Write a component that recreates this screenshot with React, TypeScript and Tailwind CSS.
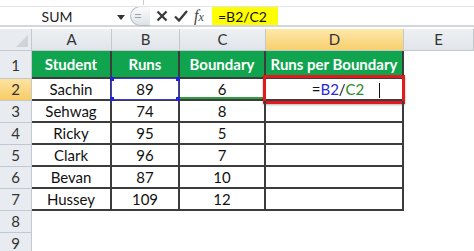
import React from 'react';

// Column widths of the sheet: row-number gutter, A, B, C, D, E
const COLS = [32, 80, 68, 86, 138, 70];

const data = [
  { name: 'Sachin', runs: '89', bnd: '6' },
  { name: 'Sehwag', runs: '74', bnd: '8' },
  { name: 'Ricky', runs: '95', bnd: '5' },
  { name: 'Clark', runs: '96', bnd: '7' },
  { name: 'Bevan', runs: '87', bnd: '10' },
  { name: 'Hussey', runs: '109', bnd: '12' },
];

function RowHead({ n, active, tall }: { n: number; active?: boolean; tall?: boolean }) {
  return (
    <div
      className={`w-[32px] shrink-0 flex justify-center border-r border-b border-[#c3c8cf] text-[15px] text-[#333] ${
        tall ? 'items-end pb-[2px]' : 'items-center'
      } ${active ? 'bg-gradient-to-b from-[#fde3a0] to-[#f7cc66]' : 'bg-[#e8ebef]'}`}
    >
      {n}
    </div>
  );
}

function FormulaBar() {
  return (
    <div className="flex h-[20px] items-stretch border-b-2 border-[#d3d7dc]">
      {/* Name box */}
      <div className="w-[130px] shrink-0 flex items-center relative">
        <span className="flex-1 text-center text-[14px] text-[#222] pr-[16px]">SUM</span>
        <svg width="8" height="5" viewBox="0 0 8 5" className="absolute right-[5px] top-[8px]">
          <path d="M0 0 L8 0 L4 5 Z" fill="#333" />
        </svg>
      </div>
      {/* Divider knob */}
      <div className="w-[20px] shrink-0 flex items-center">
        <div className="w-[22px] h-[20px] rounded-l-full border border-r-0 border-[#b9bec6] bg-gradient-to-b from-[#fafbfc] to-[#dfe3e8] flex flex-col items-center justify-center gap-[2px] pr-[6px]">
          <div className="w-[6px] h-[1px] bg-[#9aa0a8]" />
          <div className="w-[6px] h-[1px] bg-[#9aa0a8]" />
        </div>
      </div>
      {/* Cancel / enter / fx */}
      <div className="w-[62px] shrink-0 flex items-center gap-[6px] pl-[6px]">
        <svg width="12" height="12" viewBox="0 0 12 12">
          <path d="M1.5 1.5 L10.5 10.5 M10.5 1.5 L1.5 10.5" stroke="#3a3a3a" strokeWidth="2.3" />
        </svg>
        <svg width="14" height="12" viewBox="0 0 14 12">
          <path d="M1 6.5 L5 10.5 L13 1" stroke="#3a3a3a" strokeWidth="2.3" fill="none" />
        </svg>
        <span className="text-[16px] italic text-[#444] font-['Liberation_Serif',serif] leading-none">
          f<span className="text-[12px]">x</span>
        </span>
      </div>
      {/* Formula input */}
      <div className="flex-1 flex items-stretch">
        <div className="w-[66px] bg-[#ffff00] flex items-center pl-[6px] text-[14px] text-[#111]">=B2/C2</div>
      </div>
    </div>
  );
}

function ColHeaders() {
  const letters = ['A', 'B', 'C', 'D', 'E'];
  return (
    <div className="flex h-[22px]">
      <div className="w-[32px] shrink-0 bg-[#e8ebef] border-r border-b border-[#c3c8cf] relative">
        <svg width="12" height="12" viewBox="0 0 12 12" className="absolute right-[3px] bottom-[3px]">
          <path d="M12 0 L12 12 L0 12 Z" fill="#d0d4da" />
        </svg>
      </div>
      {letters.map((l, i) => (
        <div
          key={l}
          style={{ width: COLS[i + 1] }}
          className={`shrink-0 flex items-center justify-center text-[15px] text-[#333] border-r border-b border-[#c3c8cf] ${
            l === 'D' ? 'bg-gradient-to-b from-[#fde8a8] to-[#f8cf6e]' : 'bg-gradient-to-b from-[#eef0f3] to-[#e1e5ea]'
          }`}
        >
          {l}
        </div>
      ))}
    </div>
  );
}

export default function App() {
  const cell = 'shrink-0 flex items-center justify-center border-r-2 border-b-2 border-[#3c3c3c] text-[15px] text-[#111]';
  return (
    <div className="w-[474px] h-[251px] overflow-hidden bg-white font-['Lato',sans-serif] select-none">
      {/* top ribbon edge */}
      <div className="h-[7px] relative border-b border-[#e3e5e8]">
        <div className="absolute left-[143px] top-0 h-[5px] w-[1px] bg-[#c9cdd2]" />
      </div>
      <FormulaBar />
      <div className="h-[2px]" />
      <ColHeaders />

      {/* Row 1: headings */}
      <div className="flex h-[28px]">
        <RowHead n={1} tall />
        <div className="flex bg-[#0fa44d] font-bold text-white">
          {['Student', 'Runs', 'Boundary', 'Runs per Boundary'].map((h, i) => (
            <div
              key={h}
              style={{ width: COLS[i + 1] }}
              className="shrink-0 flex items-center justify-center border-r-2 border-b-2 border-[#3c3c3c] text-[15px]"
            >
              {h}
            </div>
          ))}
        </div>
      </div>

      {/* Data rows */}
      {data.map((r, idx) => {
        const n = idx + 2;
        const first = idx === 0;
        return (
          <div key={r.name} className="flex h-[22px]">
            <RowHead n={n} active={first} />
            <div style={{ width: COLS[1] }} className={cell}>{r.name}</div>
            <div style={{ width: COLS[2] }} className={`${cell} relative`}>
              {r.runs}
              {first && (
                <div className="absolute inset-[-1px] border border-[#3a3ae0]">
                  <div className="absolute -left-[2px] -top-[2px] w-[4px] h-[4px] bg-[#2020e0]" />
                  <div className="absolute -right-[2px] -top-[2px] w-[4px] h-[4px] bg-[#2020e0]" />
                  <div className="absolute -left-[2px] -bottom-[2px] w-[4px] h-[4px] bg-[#2020e0]" />
                  <div className="absolute -right-[2px] -bottom-[2px] w-[4px] h-[4px] bg-[#2020e0]" />
                </div>
              )}
            </div>
            <div style={{ width: COLS[3] }} className={`${cell} relative`}>
              {r.bnd}
              {first && <div className="absolute inset-[0px] border-b-2 border-[#2e9e3e]" />}
            </div>
            <div style={{ width: COLS[4] }} className={`${cell} relative`}>
              {first && (
                <>
                  <span className="pl-[8px] text-[15px]">
                    =<span className="text-[#2a2ad8]">B2</span>/<span className="text-[#2a8a2a]">C2</span>
                  </span>
                  <div className="absolute left-[113px] top-[4px] w-[1px] h-[15px] bg-[#111]" />
                  <div className="absolute left-[-3px] top-[-4px] right-[-3px] bottom-[-5px] border-[3px] border-[#e3191c] shadow-[0_1px_2px_rgba(0,0,0,0.3)]" />
                </>
              )}
            </div>
            <div style={{ width: COLS[5] }} className="shrink-0" />
          </div>
        );
      })}

      {/* Empty rows */}
      {[8, 9].map((n) => (
        <div key={n} className="flex h-[22px]">
          <RowHead n={n} />
        </div>
      ))}
    </div>
  );
}
